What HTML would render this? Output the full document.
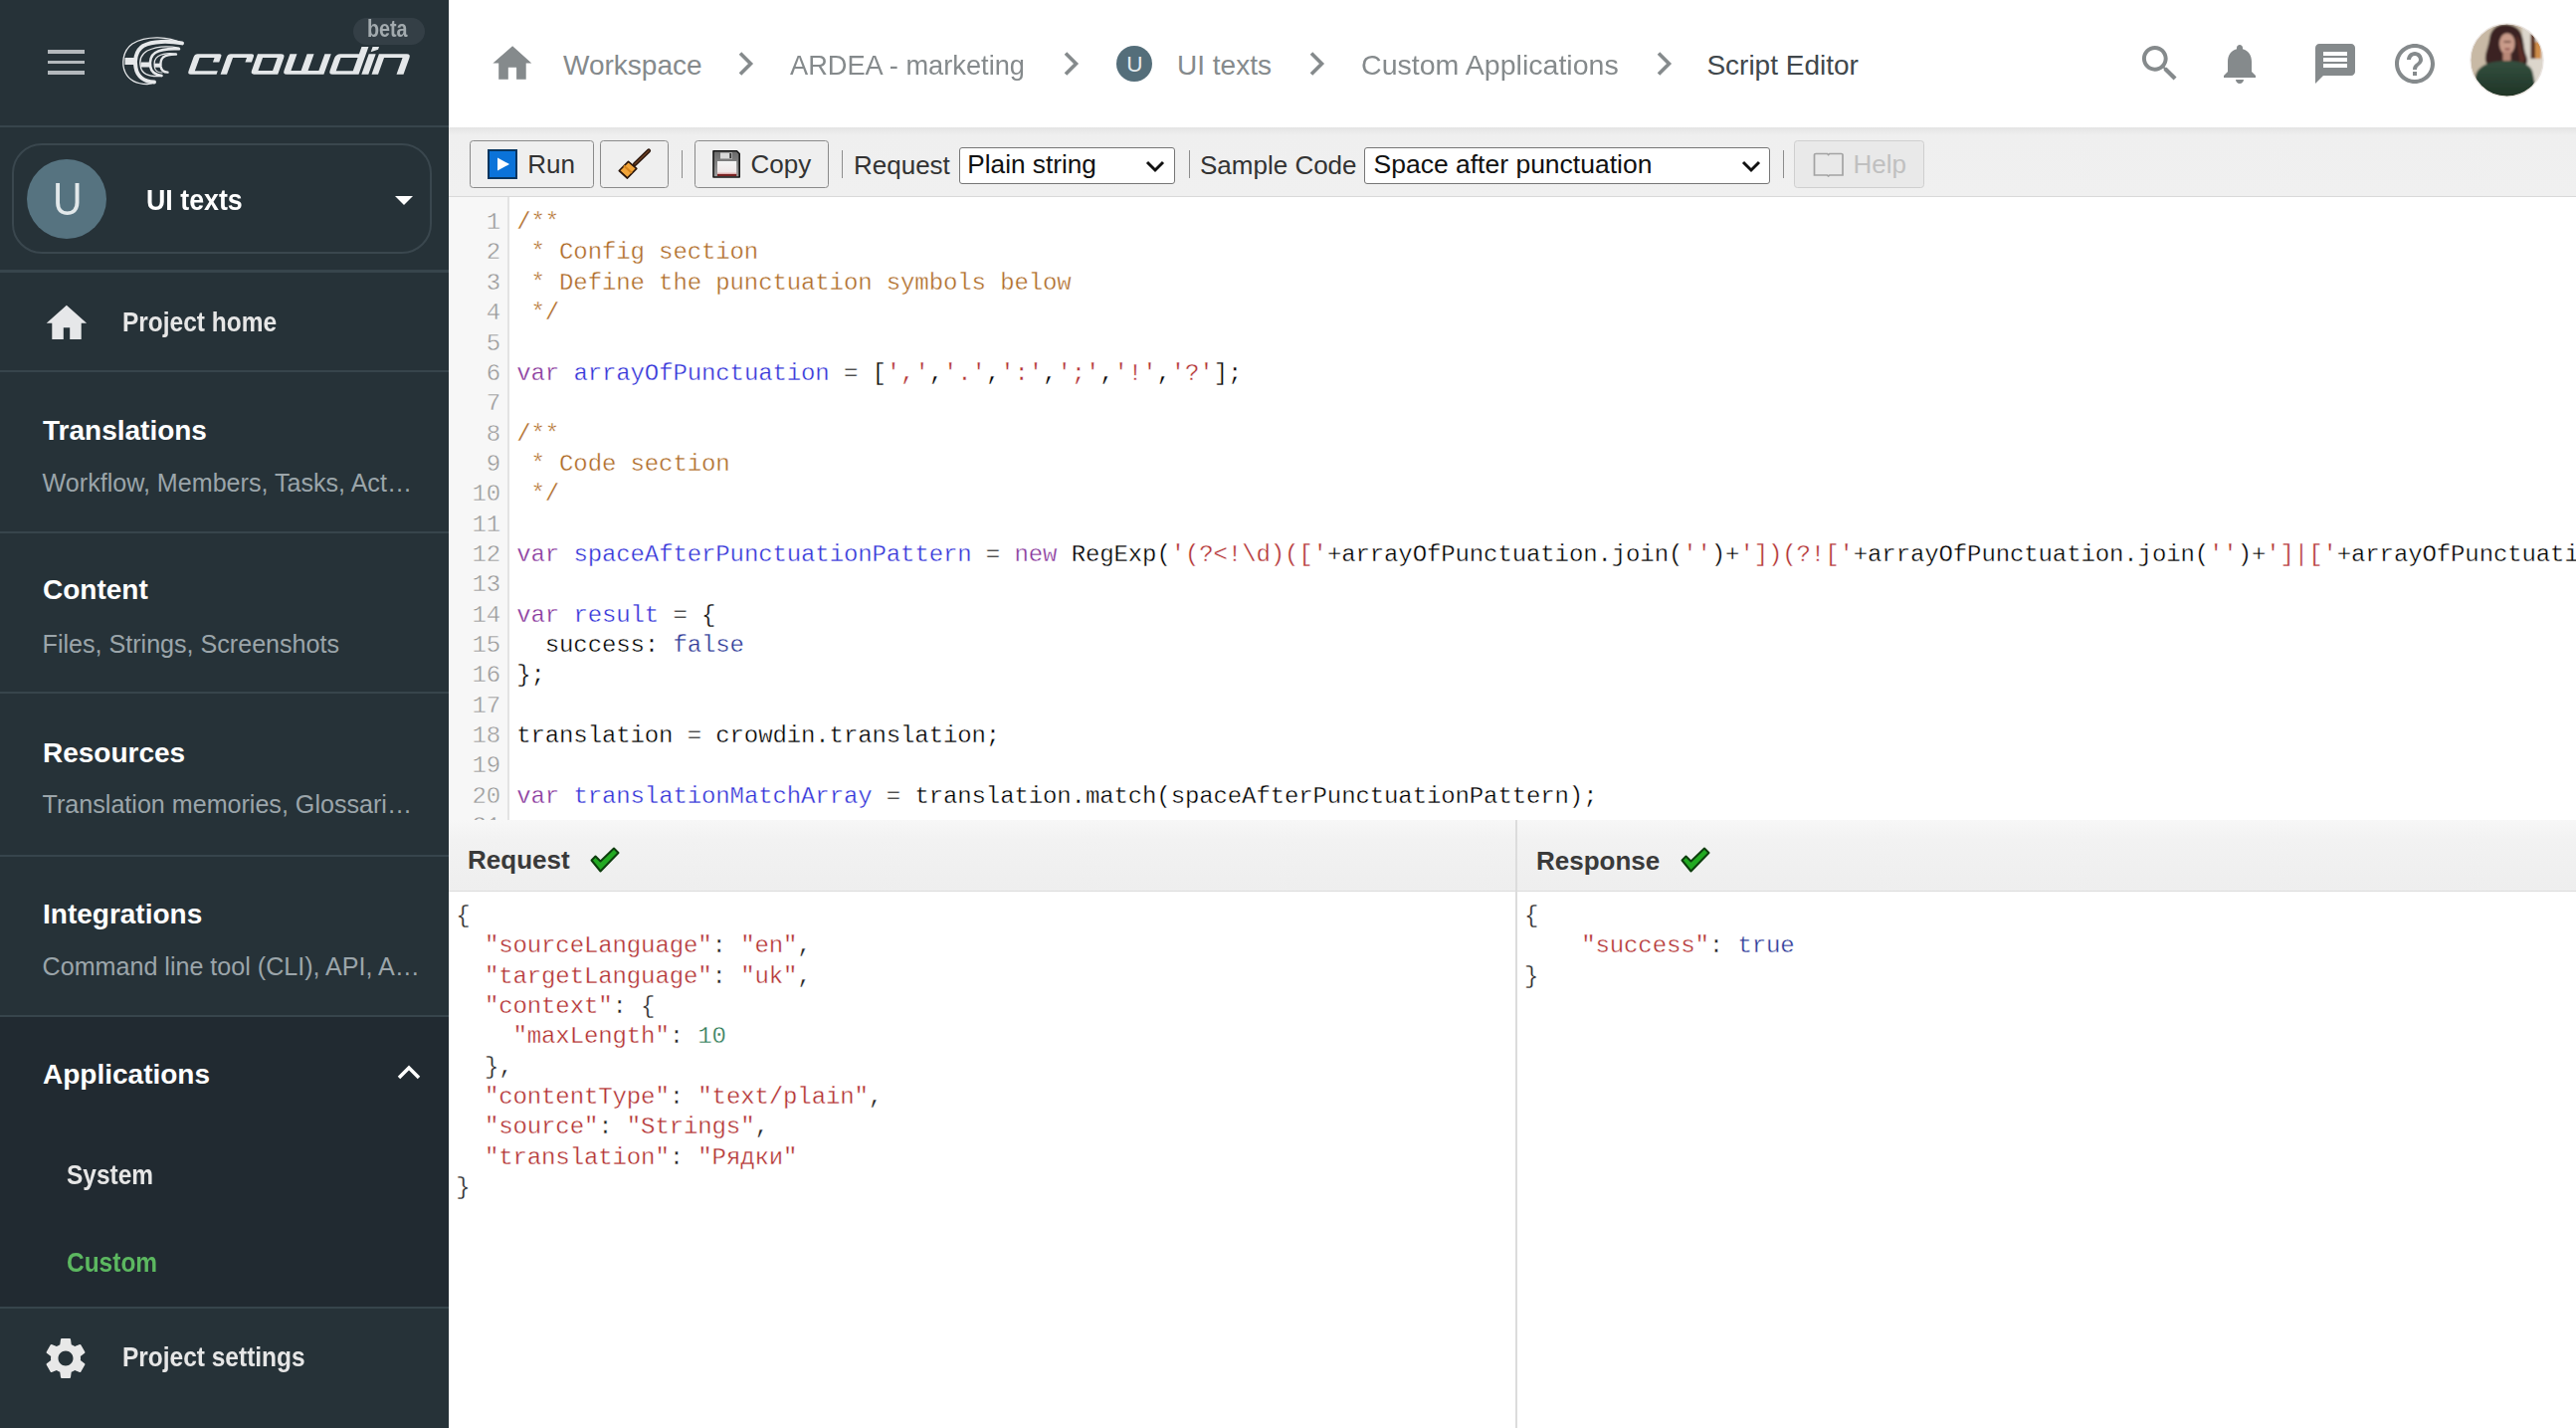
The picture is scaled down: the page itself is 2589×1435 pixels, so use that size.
<!DOCTYPE html>
<html><head><meta charset="utf-8"><style>
*{margin:0;padding:0;box-sizing:border-box}
html,body{width:2589px;height:1435px;overflow:hidden;background:#fff;font-family:"Liberation Sans",sans-serif}
.a{position:absolute}
.t{position:absolute;white-space:nowrap;line-height:1}
.sx{display:inline-block;transform-origin:0 0}
.cl{position:absolute;white-space:pre;-webkit-text-stroke:0.35px #fff;font-family:"Liberation Mono",monospace;font-size:24px;letter-spacing:-0.11px;line-height:30px;height:30px}
.cm{color:#ae6a26}.kw{color:#86349a}.df{color:#3232d8}.st{color:#b23030}.at{color:#2c3896}.nu{color:#2c7a56}
</style></head><body>
<div class="a" style="left:0px;top:0px;width:451px;height:1435px;background:#263238;"></div>
<div class="a" style="left:48px;top:50px;width:37px;height:3.6px;background:#b3b8bc;"></div>
<div class="a" style="left:48px;top:60.5px;width:37px;height:3.6px;background:#b3b8bc;"></div>
<div class="a" style="left:48px;top:71px;width:37px;height:3.6px;background:#b3b8bc;"></div>
<svg class="a" style="left:118px;top:32px" width="70" height="58" viewBox="0 0 70 58">
<g fill="none" stroke="#e6e8ea" stroke-linecap="round">
<path d="M65 11.4 C52 5 30 3 15 12 C5 19 4 33 8 41 C12 49 20 52.5 30 52.5 C34 52.5 36 51.5 37.5 50.5" stroke-width="1.3"/>
<path d="M65 11.4 C52 9 35 9 26 14 C18 19 17 30 18.5 36 C20 45 27 50 37 50.5" stroke-width="4"/>
<path d="M62 16.2 C50 13.8 38 15 30 19 C23 23 22 30 23.5 36 C25 42 31 45.5 44.5 44.5" stroke-width="1.3"/>
<path d="M62 17.3 C52 16.8 43 18 38 21 C33.5 24 32.5 30 33.2 35 C34 40 37 43 44.5 44" stroke-width="2.6"/>
<path d="M59 22 C52 21 45 22 41 24.5 C37 27 36.8 32 37.3 35.5 C38 39 40 41 45 41" stroke-width="1.2"/>
<path d="M59 22.6 C53 22.5 48.5 23.5 46 25.5 C43.5 28 43.2 32 43.6 35 C44.2 38.5 46 40.5 50.5 40.6" stroke-width="2.4"/>
</g>
<g fill="#e6e8ea"><rect x="7.5" y="26" width="11" height="7"/><rect x="23.5" y="30.5" width="9.5" height="5"/><rect x="37" y="31.7" width="6" height="4"/></g>
</svg>
<svg class="a" style="left:175px;top:40px" width="250" height="40" viewBox="-10 -34.7 250 40">
<g transform="skewX(-19.8)" fill="#e4e7e9" fill-rule="evenodd">
<path d="M6.3 -20.5 H28.3 Q30.8 -20.5 30.8 -18 V-12.3 H24.5 V-16.8 H9.6 V-3.4 H32.6 V0 H6.8 Q3.3 0 3.3 -3.5 V-17.5 Q3.3 -20.5 6.3 -20.5Z"/>
<path d="M39.6 -20.5 H60.5 Q63.5 -20.5 63.5 -17.5 V-12.2 H57 V-16.8 H43 V0 H36.6 V-17.5 Q36.6 -20.5 39.6 -20.5Z"/>
<path d="M66.6 -20.5 H90.2 Q94.2 -20.5 94.2 -16.5 V0 H70.6 Q66.6 0 66.6 -4Z M73.1 -16.6 V-3.8 H87.7 V-16.6Z"/>
<path d="M99.1 -20.5 H106.1 V-3.8 H116.2 V-20.5 H123.2 V-3.8 H134 V-20.5 H140.4 V0 H103.1 Q99.1 0 99.1 -4Z"/>
<path d="M149.7 -20.5 H168.5 V-27.6 H175.5 V0 H149.2 Q145.2 0 145.2 -4 V-16 Q145.2 -20.5 149.7 -20.5Z M151.5 -16.8 V-3.5 H168.5 V-16.8Z"/>
<path d="M178.3 -20.5 H185.3 V0 H178.3Z M179.6 -22.4 L186.1 -24.9 V-27.6 H179.6Z"/>
<path d="M188.5 0 V-20.5 H216.5 Q220.5 -20.5 220.5 -16.5 V0 H213.5 V-16.8 H195 V0Z"/>
</g></svg>
<div class="a" style="left:355px;top:18px;width:72px;height:27px;background:#343f46;border-radius:14px;"></div>
<div class="t" style="left:369.2px;top:17.7px;font-size:23.5px;font-weight:bold;color:#a3abaf;"><span class="sx" style="transform:scaleX(0.84)">beta</span></div>
<div class="a" style="left:0px;top:126px;width:451px;height:2px;background:#37454c;"></div>
<div class="a" style="left:12px;top:144px;width:422px;height:111px;border:2px solid #3a474e;border-radius:30px"></div>
<div class="a" style="left:27px;top:160px;width:80px;height:80px;background:#567380;border-radius:50%;"></div>
<div class="t" style="left:52.5px;top:177.5px;font-size:45.5px;color:#e2e8ea;"><span class="sx" style="transform:scaleX(0.9)">U</span></div>
<div class="t" style="left:147.0px;top:185.6px;font-size:30px;font-weight:bold;color:#fff;"><span class="sx" style="transform:scaleX(0.893)">UI texts</span></div>
<svg class="a" style="left:396px;top:196px" width="20" height="11"><path d="M1 1 L19 1 L10 10 Z" fill="#fff"/></svg>
<div class="a" style="left:0px;top:271px;width:451px;height:3px;background:#37454c;"></div>
<svg class="a" style="left:46px;top:306px" width="42" height="36" viewBox="0 0 42 36"><path d="M20.9 0.7 L41.1 18.8 L35.7 18.8 L35.7 35 L24.2 35 L24.2 23.2 L17.8 23.2 L17.8 35 L6.3 35 L6.3 18.8 L0.7 18.8 Z" fill="#e6e7e9"/></svg>
<div class="t" style="left:123.0px;top:309.6px;font-size:28px;font-weight:bold;color:#e6e6e6;"><span class="sx" style="transform:scaleX(0.874)">Project home</span></div>
<div class="a" style="left:0px;top:372px;width:451px;height:2px;background:#37454c;"></div>
<div class="t" style="left:43.0px;top:418.6px;font-size:28px;font-weight:bold;color:#fff;">Translations</div>
<div class="t" style="left:42.6px;top:473.1px;font-size:25.1px;color:#9ba5aa;">Workflow, Members, Tasks, Act…</div>
<div class="a" style="left:0px;top:534px;width:451px;height:2px;background:#37454c;"></div>
<div class="t" style="left:43.0px;top:579.1px;font-size:28px;font-weight:bold;color:#fff;">Content</div>
<div class="t" style="left:42.6px;top:634.7px;font-size:25.1px;color:#9ba5aa;">Files, Strings, Screenshots</div>
<div class="a" style="left:0px;top:695px;width:451px;height:2px;background:#37454c;"></div>
<div class="t" style="left:43.0px;top:742.7px;font-size:28px;font-weight:bold;color:#fff;">Resources</div>
<div class="t" style="left:42.6px;top:796.4px;font-size:25.1px;color:#9ba5aa;">Translation memories, Glossari…</div>
<div class="a" style="left:0px;top:859px;width:451px;height:2px;background:#37454c;"></div>
<div class="t" style="left:43.0px;top:904.7px;font-size:28px;font-weight:bold;color:#fff;">Integrations</div>
<div class="t" style="left:42.6px;top:958.9px;font-size:25.1px;color:#9ba5aa;">Command line tool (CLI), API, A…</div>
<div class="a" style="left:0px;top:1020px;width:451px;height:2px;background:#37454c;"></div>
<div class="a" style="left:0px;top:1022px;width:451px;height:291px;background:#212a31;"></div>
<div class="t" style="left:43.0px;top:1065.8px;font-size:28px;font-weight:bold;color:#fff;">Applications</div>
<svg class="a" style="left:399px;top:1069px" width="24" height="17"><path d="M2 14 L12 4 L22 14" stroke="#fff" stroke-width="3.5" fill="none"/></svg>
<div class="t" style="left:67.0px;top:1166.6px;font-size:28px;font-weight:bold;color:#e6e6e6;"><span class="sx" style="transform:scaleX(0.874)">System</span></div>
<div class="t" style="left:67.0px;top:1254.6px;font-size:28px;font-weight:bold;color:#5cb860;"><span class="sx" style="transform:scaleX(0.874)">Custom</span></div>
<div class="a" style="left:0px;top:1313px;width:451px;height:2px;background:#37454c;"></div>
<svg class="a" style="left:41.3px;top:1340px" width="50" height="50" viewBox="0 0 24 24"><path fill="#e8e8e8" d="M19.14 12.94c.04-.3.06-.61.06-.94 0-.32-.02-.64-.07-.94l2.03-1.58c.18-.14.23-.41.12-.61l-1.92-3.32c-.12-.22-.37-.29-.59-.22l-2.39.96c-.5-.38-1.030-.7-1.62-.94l-.36-2.54c-.04-.24-.24-.41-.48-.41h-3.84c-.24 0-.43.17-.47.41l-.36 2.540c-.59.24-1.13.57-1.62.94l-2.39-.96c-.22-.08-.47 0-.59.22L2.740 8.87c-.12.21-.08.47.12.61l2.03 1.58c-.05.3-.09.63-.09.94s.02.64.07.94l-2.03 1.58c-.18.14-.23.41-.12.61l1.92 3.32c.12.22.37.29.59.22l2.39-.96c.5.38 1.03.7 1.62.94l.36 2.54c.05.24.24.41.48.41h3.84c.24 0 .44-.17.47-.41l.36-2.54c.59-.24 1.13-.56 1.62-.94l2.39.96c.22.08.47 0 .59-.22l1.92-3.32c.12-.22.07-.47-.12-.61l-2.01-1.58zM12 15.6c-1.98 0-3.600-1.62-3.6-3.6s1.62-3.6 3.6-3.6 3.6 1.62 3.6 3.6-1.62 3.6-3.6 3.6z"/></svg>
<div class="t" style="left:123.0px;top:1349.6px;font-size:28px;font-weight:bold;color:#e6e6e6;"><span class="sx" style="transform:scaleX(0.874)">Project settings</span></div>
<svg class="a" style="left:495px;top:46px" width="40" height="34" viewBox="0 0 40 34"><path d="M20.1 0.2 L39.3 17.5 L33.7 17.5 L33.7 33.7 L24.1 33.7 L24.1 21.7 L15.8 21.7 L15.8 33.7 L6.2 33.7 L6.2 17.5 L0.4 17.5 Z" fill="#858a8c"/></svg>
<div class="t" style="left:566.0px;top:51.5px;font-size:28px;color:#858a8c;">Workspace</div>
<svg class="a" style="left:742px;top:52px" width="16" height="24" viewBox="0 0 16 24"><path d="M2 1.5 L12.5 12 L2 22.5" stroke="#858a8c" stroke-width="3.6" fill="none"/></svg>
<div class="t" style="left:794.0px;top:51.5px;font-size:28px;color:#858a8c;"><span class="sx" style="transform:scaleX(0.972)">ARDEA - marketing</span></div>
<svg class="a" style="left:1069px;top:52px" width="16" height="24" viewBox="0 0 16 24"><path d="M2 1.5 L12.5 12 L2 22.5" stroke="#858a8c" stroke-width="3.6" fill="none"/></svg>
<div class="a" style="left:1122px;top:46px;width:36px;height:36px;background:#546e7a;border-radius:50%;"></div>
<div class="t" style="left:1132.3px;top:53.5px;font-size:22.5px;color:#e6ecef;">U</div>
<div class="t" style="left:1183.0px;top:51.5px;font-size:28px;color:#858a8c;">UI texts</div>
<svg class="a" style="left:1316px;top:52px" width="16" height="24" viewBox="0 0 16 24"><path d="M2 1.5 L12.5 12 L2 22.5" stroke="#858a8c" stroke-width="3.6" fill="none"/></svg>
<div class="t" style="left:1368.0px;top:51.5px;font-size:28px;color:#858a8c;"><span class="sx" style="transform:scaleX(1.02)">Custom Applications</span></div>
<svg class="a" style="left:1664.5px;top:52px" width="16" height="24" viewBox="0 0 16 24"><path d="M2 1.5 L12.5 12 L2 22.5" stroke="#858a8c" stroke-width="3.6" fill="none"/></svg>
<div class="t" style="left:1715.4px;top:51.5px;font-size:28px;color:#41484c;">Script Editor</div>
<svg class="a" style="left:2146.5px;top:40.3px" width="47.5" height="47.5" viewBox="0 0 24 24"><path fill="#858a8c" d="M15.5 14h-.79l-.28-.27C15.41 12.59 16 11.11 16 9.5 16 5.91 13.09 3 9.5 3S3 5.91 3 9.5 5.91 16 9.5 16c1.61 0 3.09-.59 4.23-1.57l.27.28v.79l5 4.99L20.49 19l-4.99-5zm-6 0C7.01 14 5 11.99 5 9.5S7.01 5 9.5 5 14 7.01 14 9.5 11.99 14 9.5 14z"/></svg>
<svg class="a" style="left:2227px;top:40px" width="48" height="48" viewBox="0 0 24 24"><path fill="#858a8c" d="M12 22c1.1 0 2-.9 2-2h-4c0 1.1.89 2 2 2zm6-6v-5c0-3.07-1.64-5.64-4.5-6.32V4c0-.83-.67-1.5-1.5-1.5s-1.5.67-1.5 1.5v.68C7.63 5.36 6 7.92 6 11v5l-2 2v1h16v-1l-2-2z"/></svg>
<svg class="a" style="left:2323px;top:40px" width="48" height="48" viewBox="0 0 24 24"><path fill="#858a8c" d="M20 2H4c-1.1 0-1.99.9-1.99 2L2 22l4-4h14c1.1 0 2-.9 2-2V4c0-1.1-.9-2-2-2zM18 14H6v-2h12v2zm0-3H6V9h12v2zm0-3H6V6h12v2z"/></svg>
<svg class="a" style="left:2403px;top:40px" width="48" height="48" viewBox="0 0 24 24"><path fill="#858a8c" d="M11 18h2v-2h-2v2zm1-16C6.48 2 2 6.48 2 12s4.48 10 10 10 10-4.48 10-10S17.52 2 12 2zm0 18c-4.41 0-8-3.59-8-8s3.59-8 8-8 8 3.59 8 8-3.59 8-8 8zm0-14c-2.21 0-4 1.79-4 4h2c0-1.1.9-2 2-2s2 .9 2 2c0 2-3 1.75-3 5h2c0-2.25 3-2.5 3-5 0-2.21-1.79-4-4-4z"/></svg>
<svg class="a" style="left:2482px;top:23px" width="75" height="75" viewBox="0 0 75 75">
<defs><clipPath id="avc"><circle cx="37.5" cy="37.5" r="36.5"/></clipPath><filter id="avb" x="-10%" y="-10%" width="120%" height="120%"><feGaussianBlur stdDeviation="1.0"/></filter>
<linearGradient id="avg" x1="0" y1="0" x2="0" y2="1"><stop offset="0" stop-color="#34503f"/><stop offset="1" stop-color="#1d3124"/></linearGradient></defs>
<g clip-path="url(#avc)"><g filter="url(#avb)">
<rect x="-5" y="-5" width="85" height="85" fill="#c8b9a5"/>
<rect x="53" y="-5" width="27" height="85" fill="#dcd6cc"/>
<rect x="61.5" y="11" width="4.5" height="25" fill="#5a3020"/>
<rect x="66" y="19" width="6" height="17" fill="#cf8d48"/>
<path d="M35 1.5 C26 1.5 21 8 20 16 C19 24 15 31 16 38 C17 43 23 45 29 43 L50 44 C57 45 60 40 57 33 C54 26 55 18 52 11 C49 4 43 1.5 35 1.5Z" fill="#3b2420"/>
<path d="M47 12 C52 18 52 28 56 36 L51 42 C49 33 49 22 47 12Z" fill="#5a2e26"/>
<ellipse cx="37.8" cy="21" rx="7.8" ry="10.8" fill="#c99b8a"/>
<rect x="34.5" y="18" width="7" height="2" fill="#7a5548"/>
<rect x="35.5" y="25.5" width="5" height="1.8" fill="#8a4a45"/>
<rect x="33.5" y="29" width="8" height="9" fill="#b98878"/>
<path d="M2 78 L6 53 C8 44 18 38.5 37 38 C55 38 63 43 64 52 L69 78Z" fill="url(#avg)"/>
</g></g>
<circle cx="37.5" cy="37.5" r="36.6" fill="none" stroke="#ebe5e1" stroke-width="1.3"/>
</svg>
<div class="a" style="left:451px;top:128px;width:2138px;height:70px;background:linear-gradient(#e4e4e4 0px,#efefef 8px,#f0f0f0 100%);border-bottom:1.5px solid #d9d9d9"></div>
<div class="a" style="left:472px;top:141px;width:124.5px;height:47.5px;border:1.6px solid #8a8a8a;border-radius:3.5px;background:#efefef"></div>
<svg class="a" style="left:490px;top:150px" width="30" height="30" viewBox="0 0 30 30"><rect x="1" y="1" width="28" height="28" fill="#0b73d9" stroke="#07355f" stroke-width="2"/><path d="M10 8.5 L22 15 L10 21.5Z" fill="#fff"/></svg>
<div class="a" style="left:603px;top:141px;width:68.5px;height:47.5px;border:1.6px solid #8a8a8a;border-radius:3.5px;background:#efefef"></div>
<svg class="a" style="left:618px;top:148px" width="38" height="34" viewBox="618 148 38 34"><path d="M652 151.5 L638 165" stroke="#2a160c" stroke-width="4.2" stroke-linecap="round"/><path d="M652 151.5 L638 165" stroke="#6b3f22" stroke-width="1.6" stroke-linecap="round"/><path d="M631.5 162.3 L639.8 169.3 L630.5 179 L622.3 171.5Z" fill="#f2a53a" stroke="#2a160c" stroke-width="1.7" stroke-linejoin="round"/><path d="M627 166.5 L635 173.8" stroke="#d9861c" stroke-width="2.2"/></svg>
<div class="a" style="left:685px;top:151px;width:1.4px;height:28px;background:#8d8d8d"></div>
<div class="a" style="left:697.5px;top:141px;width:135.5px;height:47.5px;border:1.6px solid #8a8a8a;border-radius:3.5px;background:#efefef"></div>
<svg class="a" style="left:714px;top:149px" width="32" height="32" viewBox="714 149 32 32"><defs><linearGradient id="fg" x1="0" y1="0" x2="0" y2="1"><stop offset="0" stop-color="#6a6a6a"/><stop offset="1" stop-color="#9c9c9c"/></linearGradient><linearGradient id="fr" x1="0" y1="0" x2="0" y2="1"><stop offset="0" stop-color="#f4f4f4"/><stop offset=".75" stop-color="#f0e8e8"/><stop offset="1" stop-color="#c86a6a"/></linearGradient></defs><path d="M717 151.8 H740.5 L743.2 154.5 V178 H717Z" fill="url(#fg)" stroke="#161616" stroke-width="1.6" stroke-linejoin="round"/><rect x="724" y="153.5" width="12" height="6" fill="#d8d8d8"/><rect x="733.3" y="154" width="2" height="5" fill="#333"/><rect x="721" y="162" width="19.2" height="14.5" fill="url(#fr)"/><rect x="721" y="175" width="19.2" height="2" fill="#7a2222"/></svg>
<div class="a" style="left:846px;top:151px;width:1.4px;height:28px;background:#8d8d8d"></div>
<div class="a" style="left:1194.5px;top:151px;width:1.4px;height:28px;background:#8d8d8d"></div>
<div class="a" style="left:963.5px;top:147.5px;width:217px;height:37.5px;border:1.5px solid #767676;border-radius:3px;background:#fff"></div>
<svg class="a" style="left:1150px;top:159px" width="22" height="16" viewBox="0 0 22 16"><path d="M3 4 L11 12 L19 4" stroke="#111" stroke-width="3" fill="none"/></svg>
<div class="a" style="left:1792px;top:151px;width:1.4px;height:28px;background:#8d8d8d"></div>
<div class="a" style="left:1371px;top:147.5px;width:408px;height:37.5px;border:1.5px solid #767676;border-radius:3px;background:#fff"></div>
<svg class="a" style="left:1749px;top:159px" width="22" height="16" viewBox="0 0 22 16"><path d="M3 4 L11 12 L19 4" stroke="#111" stroke-width="3" fill="none"/></svg>
<div class="a" style="left:1803px;top:141px;width:131px;height:47.5px;border:1.6px solid #cfcfcf;border-radius:3.5px;background:#e9e9e9"></div>
<svg class="a" style="left:1820px;top:151px" width="36" height="29" viewBox="1820 151 36 29"><path d="M1823.5 176 V155.5 Q1823.5 154.5 1825 154.5 H1836.5 L1837.6 155.6 L1838.7 154.5 H1850.5 Q1852 154.5 1852 155.5 V176 H1838.8 L1837.6 177 L1836.4 176Z" fill="none" stroke="#a3a3a3" stroke-width="1.7"/></svg>
<div class="t" style="left:530.2px;top:152.3px;font-size:26px;color:#333;">Run</div>
<div class="t" style="left:754.6px;top:152.3px;font-size:26px;color:#333;">Copy</div>
<div class="t" style="left:858.0px;top:153.0px;font-size:26px;color:#333;">Request</div>
<div class="t" style="left:972.3px;top:152.1px;font-size:26.2px;color:#111;">Plain string</div>
<div class="t" style="left:1206.0px;top:153.0px;font-size:26px;color:#333;">Sample Code</div>
<div class="t" style="left:1380.5px;top:151.9px;font-size:26.5px;color:#111;">Space after punctuation</div>
<div class="t" style="left:1862.4px;top:152.3px;font-size:26px;color:#c0c0c0;">Help</div>
<div class="a" style="left:451px;top:198px;width:60px;height:626px;background:#f7f7f7;"></div>
<div class="a" style="left:510px;top:198px;width:2px;height:626px;background:#e3e3e3;"></div>
<div class="a" style="left:451px;top:198px;width:2138px;height:626px;overflow:hidden">
<div class="cl" style="left:0;width:52px;text-align:right;top:11.14px;color:#999">1</div>
<div class="cl" style="left:68.20px;top:11.14px;color:#000"><span class="cm">/**</span></div>
<div class="cl" style="left:0;width:52px;text-align:right;top:41.49px;color:#999">2</div>
<div class="cl" style="left:68.20px;top:41.49px;color:#000"><span class="cm"> * Config section</span></div>
<div class="cl" style="left:0;width:52px;text-align:right;top:71.84px;color:#999">3</div>
<div class="cl" style="left:68.20px;top:71.84px;color:#000"><span class="cm"> * Define the punctuation symbols below</span></div>
<div class="cl" style="left:0;width:52px;text-align:right;top:102.19px;color:#999">4</div>
<div class="cl" style="left:68.20px;top:102.19px;color:#000"><span class="cm"> */</span></div>
<div class="cl" style="left:0;width:52px;text-align:right;top:132.54px;color:#999">5</div>
<div class="cl" style="left:68.20px;top:132.54px;color:#000"></div>
<div class="cl" style="left:0;width:52px;text-align:right;top:162.89px;color:#999">6</div>
<div class="cl" style="left:68.20px;top:162.89px;color:#000"><span class="kw">var</span> <span class="df">arrayOfPunctuation</span> = [<span class="st">','</span>,<span class="st">'.'</span>,<span class="st">':'</span>,<span class="st">';'</span>,<span class="st">'!'</span>,<span class="st">'?'</span>];</div>
<div class="cl" style="left:0;width:52px;text-align:right;top:193.24px;color:#999">7</div>
<div class="cl" style="left:68.20px;top:193.24px;color:#000"></div>
<div class="cl" style="left:0;width:52px;text-align:right;top:223.59px;color:#999">8</div>
<div class="cl" style="left:68.20px;top:223.59px;color:#000"><span class="cm">/**</span></div>
<div class="cl" style="left:0;width:52px;text-align:right;top:253.94px;color:#999">9</div>
<div class="cl" style="left:68.20px;top:253.94px;color:#000"><span class="cm"> * Code section</span></div>
<div class="cl" style="left:0;width:52px;text-align:right;top:284.29px;color:#999">10</div>
<div class="cl" style="left:68.20px;top:284.29px;color:#000"><span class="cm"> */</span></div>
<div class="cl" style="left:0;width:52px;text-align:right;top:314.64px;color:#999">11</div>
<div class="cl" style="left:68.20px;top:314.64px;color:#000"></div>
<div class="cl" style="left:0;width:52px;text-align:right;top:344.99px;color:#999">12</div>
<div class="cl" style="left:68.20px;top:344.99px;color:#000"><span class="kw">var</span> <span class="df">spaceAfterPunctuationPattern</span> = <span class="kw">new</span> RegExp(<span class="st">'(?&lt;!\d)(['</span>+arrayOfPunctuation.join(<span class="st">''</span>)+<span class="st">'])(?!['</span>+arrayOfPunctuation.join(<span class="st">''</span>)+<span class="st">']|['</span>+arrayOfPunctuation.join(<span class="st">''</span>)+<span class="st">'])')</span>, "g");</div>
<div class="cl" style="left:0;width:52px;text-align:right;top:375.34px;color:#999">13</div>
<div class="cl" style="left:68.20px;top:375.34px;color:#000"></div>
<div class="cl" style="left:0;width:52px;text-align:right;top:405.69px;color:#999">14</div>
<div class="cl" style="left:68.20px;top:405.69px;color:#000"><span class="kw">var</span> <span class="df">result</span> = {</div>
<div class="cl" style="left:0;width:52px;text-align:right;top:436.04px;color:#999">15</div>
<div class="cl" style="left:68.20px;top:436.04px;color:#000">  success: <span class="at">false</span></div>
<div class="cl" style="left:0;width:52px;text-align:right;top:466.39px;color:#999">16</div>
<div class="cl" style="left:68.20px;top:466.39px;color:#000">};</div>
<div class="cl" style="left:0;width:52px;text-align:right;top:496.74px;color:#999">17</div>
<div class="cl" style="left:68.20px;top:496.74px;color:#000"></div>
<div class="cl" style="left:0;width:52px;text-align:right;top:527.09px;color:#999">18</div>
<div class="cl" style="left:68.20px;top:527.09px;color:#000">translation = crowdin.translation;</div>
<div class="cl" style="left:0;width:52px;text-align:right;top:557.44px;color:#999">19</div>
<div class="cl" style="left:68.20px;top:557.44px;color:#000"></div>
<div class="cl" style="left:0;width:52px;text-align:right;top:587.79px;color:#999">20</div>
<div class="cl" style="left:68.20px;top:587.79px;color:#000"><span class="kw">var</span> <span class="df">translationMatchArray</span> = translation.match(spaceAfterPunctuationPattern);</div>
<div class="cl" style="left:0;width:52px;text-align:right;top:618.14px;color:#999">21</div>
<div class="cl" style="left:68.20px;top:618.14px;color:#000"></div>
</div>
<div class="a" style="left:451px;top:824px;width:2138px;height:72px;background:linear-gradient(#f7f7f7 0px,#f2f2f2 20px,#eeeeee 100%);border-bottom:1.5px solid #dcdcdc"></div>
<div class="a" style="left:1523px;top:824px;width:2px;height:611px;background:#dcdcdc;"></div>
<div class="t" style="left:470.1px;top:851.2px;font-size:26px;font-weight:bold;color:#3a3a3a;">Request</div>
<div class="t" style="left:1544.0px;top:851.9px;font-size:26px;font-weight:bold;color:#3a3a3a;">Response</div>
<svg class="a" style="left:592px;top:851px" width="32" height="27" viewBox="0 0 32 27"><path d="M2.5 13.5 L6.5 9.5 L11.5 14.5 L25 1.5 L29.5 6 L11.5 24.5Z" fill="#22aa22" stroke="#0d3d0d" stroke-width="2" stroke-linejoin="round"/></svg>
<svg class="a" style="left:1688px;top:851px" width="32" height="27" viewBox="0 0 32 27"><path d="M2.5 13.5 L6.5 9.5 L11.5 14.5 L25 1.5 L29.5 6 L11.5 24.5Z" fill="#22aa22" stroke="#0d3d0d" stroke-width="2" stroke-linejoin="round"/></svg>
<div class="cl" style="left:458.3px;top:905.94px;color:#222">{</div>
<div class="cl" style="left:458.3px;top:936.29px;color:#222">  <span class="st">"sourceLanguage"</span>: <span class="st">"en"</span>,</div>
<div class="cl" style="left:458.3px;top:966.64px;color:#222">  <span class="st">"targetLanguage"</span>: <span class="st">"uk"</span>,</div>
<div class="cl" style="left:458.3px;top:996.99px;color:#222">  <span class="st">"context"</span>: {</div>
<div class="cl" style="left:458.3px;top:1027.34px;color:#222">    <span class="st">"maxLength"</span>: <span class="nu">10</span></div>
<div class="cl" style="left:458.3px;top:1057.69px;color:#222">  },</div>
<div class="cl" style="left:458.3px;top:1088.04px;color:#222">  <span class="st">"contentType"</span>: <span class="st">"text/plain"</span>,</div>
<div class="cl" style="left:458.3px;top:1118.39px;color:#222">  <span class="st">"source"</span>: <span class="st">"Strings"</span>,</div>
<div class="cl" style="left:458.3px;top:1148.74px;color:#222">  <span class="st">"translation"</span>: <span class="st">"Рядки"</span></div>
<div class="cl" style="left:458.3px;top:1179.09px;color:#222">}</div>
<div class="cl" style="left:1532px;top:905.94px;color:#222">{</div>
<div class="cl" style="left:1532px;top:936.29px;color:#222">    <span class="st">"success"</span>: <span class="at">true</span></div>
<div class="cl" style="left:1532px;top:966.64px;color:#222">}</div>
</body></html>
